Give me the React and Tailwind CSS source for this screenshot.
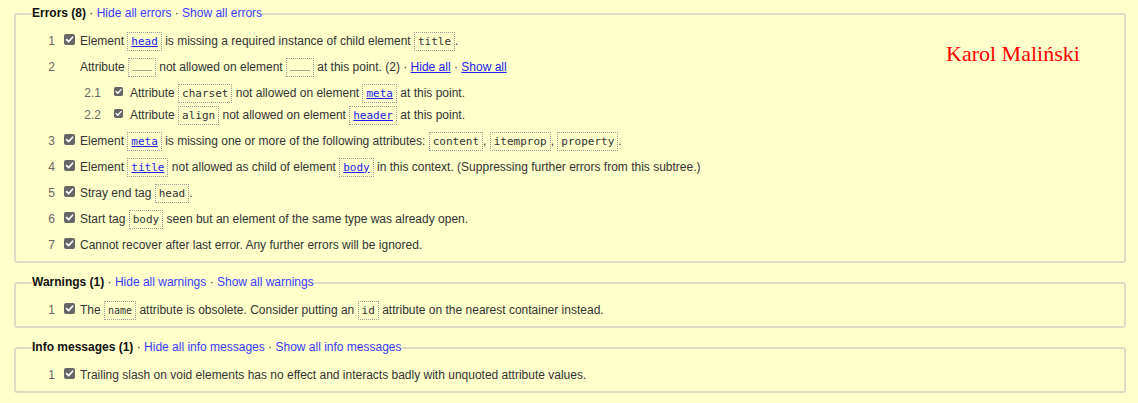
const sans = "font-['Liberation_Sans',Arial,sans-serif]";
const mono = "font-['DejaVu_Sans_Mono',monospace]";

function Check({ small }) {
  const s = small ? 9 : 11;
  return (
    <svg width={s} height={s} viewBox="0 0 11 11" className="shrink-0 -translate-y-[2px]">
      <rect x="0" y="0" width="11" height="11" rx="2" fill="#666" />
      <path d="M2.6 5.6 L4.6 7.6 L8.6 3.2" fill="none" stroke="#fff" strokeWidth="1.7" strokeLinecap="round" strokeLinejoin="round" />
    </svg>
  );
}

function C({ children, link, small }) {
  return (
    <code
      className={`inline-block border border-dotted border-[#9a9a9a] px-[3px] py-[1px] leading-[15px] ${mono} ${
        small ? "text-[10px]" : "text-[11px]"
      } ${link ? "text-[#2222ee] underline" : "text-[#333]"}`}
    >
      {children}
    </code>
  );
}

function Blank() {
  return (
    <code className={`inline-block border border-dotted border-[#9a9a9a] px-[3px] py-[1px] leading-[15px] text-[11px] text-[#333] ${mono}`}>
      <span className="relative -top-[3px]">___</span>
    </code>
  );
}

function Row({ n, children, noCheck }) {
  return (
    <div className="flex h-[26px] items-center">
      <span className="w-[23px] text-right text-[#666]">{n}</span>
      <span className="ml-[9px] flex w-[11px] justify-center">{!noCheck && <Check />}</span>
      <span className="ml-[5px] whitespace-nowrap">{children}</span>
    </div>
  );
}

function SubRow({ n, children }) {
  return (
    <div className="flex h-[22px] items-center">
      <span className="w-[69px] text-right text-[#666]">{n}</span>
      <span className="ml-[13px] flex w-[9px] justify-center">
        <Check small />
      </span>
      <span className="ml-[7px] whitespace-nowrap">{children}</span>
    </div>
  );
}

function Section({ title, hide, show, children, className = "" }) {
  return (
    <fieldset
      className={`ml-[14px] mr-[12px] rounded-[3px] border-2 border-[#dcdcc6] pl-[16px] pr-4 pt-[7px] pb-[3px] ${className}`}
    >
      <legend className="p-0 leading-[15px]">
        <b className="text-[#111]">{title}</b>
        <span className="text-[#333]"> · </span>
        <a className="text-[#3a3aff]">{hide}</a>
        <span className="text-[#333]"> · </span>
        <a className="text-[#3a3aff]">{show}</a>
      </legend>
      {children}
    </fieldset>
  );
}

export default function App() {
  return (
    <div className={`relative min-h-screen bg-[#ffffcc] pt-[6px] pb-[10px] text-[12px] text-[#333] ${sans}`}>
      <Section title="Errors (8)" hide="Hide all errors" show="Show all errors">
        <Row n="1">
          Element <C link>head</C> is missing a required instance of child element <C>title</C>.
        </Row>
        <Row n="2" noCheck>
          Attribute <Blank /> not allowed on element <Blank /> at this point. (2) ·{" "}
          <a className="text-[#2222ee] underline">Hide all</a> ·{" "}
          <a className="text-[#2222ee] underline">Show all</a>
        </Row>
        <div className="py-[2px]">
          <SubRow n="2.1">
            Attribute <C>charset</C> not allowed on element <C link>meta</C> at this point.
          </SubRow>
          <SubRow n="2.2">
            Attribute <C>align</C> not allowed on element <C link>header</C> at this point.
          </SubRow>
        </div>
        <Row n="3">
          Element <C link>meta</C> is missing one or more of the following attributes: <C>content</C>,{" "}
          <C>itemprop</C>, <C>property</C>.
        </Row>
        <Row n="4">
          Element <C link>title</C> not allowed as child of element <C link>body</C> in this context.
          (Suppressing further errors from this subtree.)
        </Row>
        <Row n="5">
          Stray end tag <C>head</C>.
        </Row>
        <Row n="6">
          Start tag <C>body</C> seen but an element of the same type was already open.
        </Row>
        <Row n="7">Cannot recover after last error. Any further errors will be ignored.</Row>
      </Section>

      <Section className="mt-[12px]" title="Warnings (1)" hide="Hide all warnings" show="Show all warnings">
        <Row n="1">
          The <C small>name</C> attribute is obsolete. Consider putting an <C>id</C> attribute on the nearest
          container instead.
        </Row>
      </Section>

      <Section
        className="mt-[12px]"
        title="Info messages (1)"
        hide="Hide all info messages"
        show="Show all info messages"
      >
        <Row n="1">Trailing slash on void elements has no effect and interacts badly with unquoted attribute values.</Row>
      </Section>

      <div className="absolute left-[946px] top-[37px] font-['Liberation_Serif',Georgia,serif] text-[22px] text-[#ff0000]">
        Karol Maliński
      </div>
    </div>
  );
}
